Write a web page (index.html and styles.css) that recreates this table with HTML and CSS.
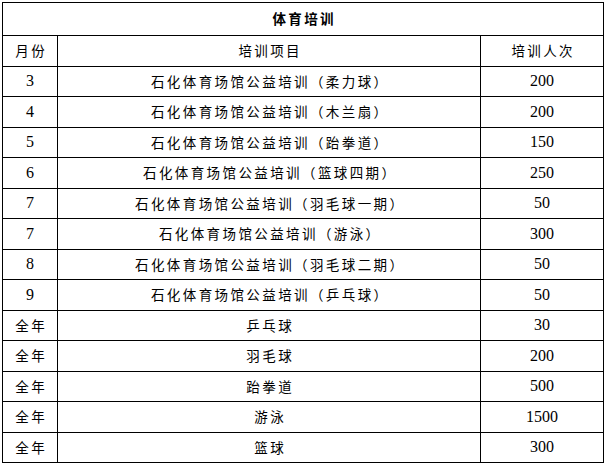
FILE: index.html
```html
<!DOCTYPE html>
<html lang="zh-CN">
<head>
<meta charset="utf-8">
<title>体育培训</title>
<link rel="stylesheet" href="styles.css">
</head>
<body>
<table class="sheet">
  <colgroup>
    <col class="c-month">
    <col class="c-item">
    <col class="c-count">
  </colgroup>
  <tr class="title-row"><td colspan="3" class="zh title">体育培训</td></tr>
  <tr><td class="zh">月份</td><td class="zh">培训项目</td><td class="zh">培训人次</td></tr>
  <tr><td class="num">3</td><td class="zh">石化体育场馆公益培训（柔力球）</td><td class="num">200</td></tr>
  <tr><td class="num">4</td><td class="zh">石化体育场馆公益培训（木兰扇）</td><td class="num">200</td></tr>
  <tr><td class="num">5</td><td class="zh">石化体育场馆公益培训（跆拳道）</td><td class="num">150</td></tr>
  <tr><td class="num">6</td><td class="zh">石化体育场馆公益培训（篮球四期）</td><td class="num">250</td></tr>
  <tr><td class="num">7</td><td class="zh">石化体育场馆公益培训（羽毛球一期）</td><td class="num">50</td></tr>
  <tr><td class="num">7</td><td class="zh">石化体育场馆公益培训（游泳）</td><td class="num">300</td></tr>
  <tr><td class="num">8</td><td class="zh">石化体育场馆公益培训（羽毛球二期）</td><td class="num">50</td></tr>
  <tr><td class="num">9</td><td class="zh">石化体育场馆公益培训（乒乓球）</td><td class="num">50</td></tr>
  <tr><td class="zh">全年</td><td class="zh">乒乓球</td><td class="num">30</td></tr>
  <tr><td class="zh">全年</td><td class="zh">羽毛球</td><td class="num">200</td></tr>
  <tr><td class="zh">全年</td><td class="zh">跆拳道</td><td class="num">500</td></tr>
  <tr><td class="zh">全年</td><td class="zh">游泳</td><td class="num">1500</td></tr>
  <tr><td class="zh">全年</td><td class="zh">篮球</td><td class="num">300</td></tr>
</table>
</body>
</html>
```
FILE: styles.css
```css
html, body {
  margin: 0;
  background: #ffffff;
}
body {
  padding: 2px 0 0 2px;
  color: #000;
  font-family: "Liberation Serif", "Noto Sans CJK SC", serif;
}
.sheet {
  border-collapse: collapse;
  table-layout: fixed;
  width: 601px;
}
.c-month { width: 55px; }
.c-item { width: 423px; }
.c-count { width: 123px; }
.sheet tr { height: 30.5px; }
.sheet tr.title-row { height: 33px; }
.sheet td {
  border: 1.5px solid #000;
  padding: 0;
  text-align: center;
  vertical-align: middle;
  line-height: 1;
  white-space: nowrap;
}
.zh {
  font-family: "Noto Sans CJK SC", sans-serif;
  font-size: 13.5px;
  letter-spacing: 2.4px;
  text-indent: 2.4px;
}
.num {
  font-size: 16px;
  padding-right: 3px;
}
.title {
  font-weight: bold;
}
```
